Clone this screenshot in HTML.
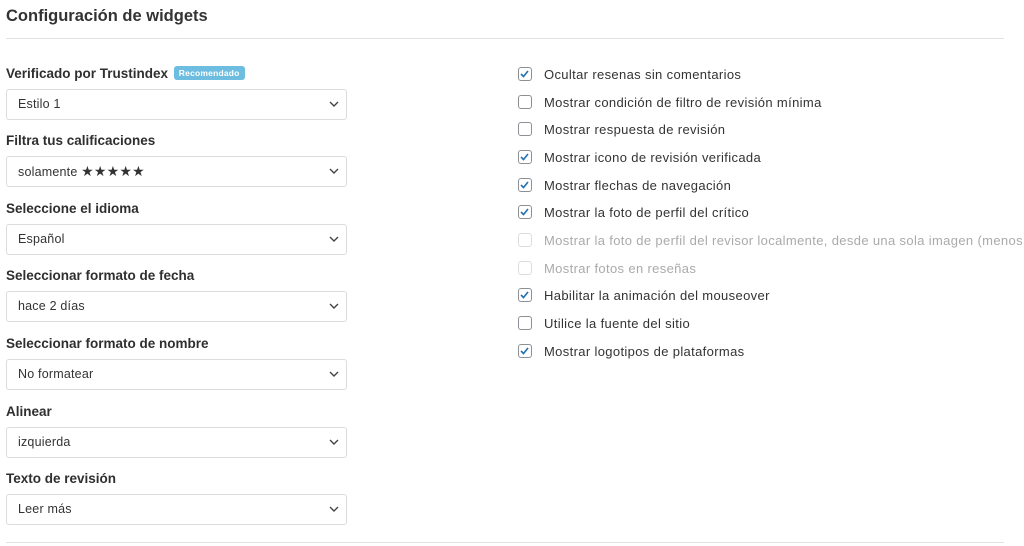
<!DOCTYPE html><html><head><meta charset="utf-8"><style>
body{margin:0;width:1024px;height:546px;background:#fff;font-family:"Liberation Sans",sans-serif;color:#333;overflow:hidden;position:relative}
.t{position:absolute;left:6px;top:7px;font-size:16.5px;font-weight:bold;color:#333}
.hr{position:absolute;left:6px;width:998px;height:1px;background:#e2e2e2}
.l{position:absolute;left:6px;font-size:13.5px;font-weight:bold;color:#2f2f2f}
.badge{display:inline-block;background:#6dbde0;color:#fff;font-size:8.5px;font-weight:bold;padding:2px 5px;border-radius:3px;vertical-align:2px;margin-left:2px;letter-spacing:0.2px}
.s{position:absolute;left:6px;width:339px;height:29px;border:1px solid #dcdcdc;border-radius:3px;font-size:12.5px;line-height:29px;color:#333;box-sizing:content-box;letter-spacing:0.2px}
.s span{margin-left:11px}
.st{font-size:14px;color:#333}
.s svg{position:absolute;right:7px;top:11px}
.c{position:absolute;left:518px;font-size:13px;color:#333;white-space:nowrap;letter-spacing:0.35px}
.c i{position:absolute;left:0;top:0;width:12px;height:12px;border:1px solid #8c8f94;border-radius:3px}
.c.d{color:#aaa}.c.d i{border-color:#ddd}
.c b{font-weight:normal;margin-left:26px}
.c svg{position:absolute;left:1px;top:2px}
</style></head><body>
<div class="t">Configuración de widgets</div>
<div class="hr" style="top:38px"></div>
<div class="hr" style="top:542px"></div>
<div class="l" style="top:66px">Verificado por Trustindex <span class="badge">Recomendado</span></div>
<div class="s" style="top:89px"><span>Estilo 1</span><svg width="10" height="7"><path d="M1 1l4 4 4-4" stroke="#444" stroke-width="1.4" fill="none"/></svg></div>
<div class="l" style="top:133px">Filtra tus calificaciones</div>
<div class="s" style="top:156px"><span>solamente <span class="st" style="margin:0">★★★★★</span></span><svg width="10" height="7"><path d="M1 1l4 4 4-4" stroke="#444" stroke-width="1.4" fill="none"/></svg></div>
<div class="l" style="top:201px">Seleccione el idioma</div>
<div class="s" style="top:224px"><span>Español</span><svg width="10" height="7"><path d="M1 1l4 4 4-4" stroke="#444" stroke-width="1.4" fill="none"/></svg></div>
<div class="l" style="top:268px">Seleccionar formato de fecha</div>
<div class="s" style="top:291px"><span>hace 2 días</span><svg width="10" height="7"><path d="M1 1l4 4 4-4" stroke="#444" stroke-width="1.4" fill="none"/></svg></div>
<div class="l" style="top:336px">Seleccionar formato de nombre</div>
<div class="s" style="top:359px"><span>No formatear</span><svg width="10" height="7"><path d="M1 1l4 4 4-4" stroke="#444" stroke-width="1.4" fill="none"/></svg></div>
<div class="l" style="top:404px">Alinear</div>
<div class="s" style="top:427px"><span>izquierda</span><svg width="10" height="7"><path d="M1 1l4 4 4-4" stroke="#444" stroke-width="1.4" fill="none"/></svg></div>
<div class="l" style="top:471px">Texto de revisión</div>
<div class="s" style="top:494px"><span>Leer más</span><svg width="10" height="7"><path d="M1 1l4 4 4-4" stroke="#444" stroke-width="1.4" fill="none"/></svg></div>

<div class="c" style="top:67px"><i></i><svg width="11" height="10"><path d="M2 5l2.5 2.5L9 2" stroke="#2271b1" stroke-width="1.6" fill="none"/></svg><b>Ocultar resenas sin comentarios</b></div>
<div class="c" style="top:95px"><i></i><b>Mostrar condición de filtro de revisión mínima</b></div>
<div class="c" style="top:122px"><i></i><b>Mostrar respuesta de revisión</b></div>
<div class="c" style="top:150px"><i></i><svg width="11" height="10"><path d="M2 5l2.5 2.5L9 2" stroke="#2271b1" stroke-width="1.6" fill="none"/></svg><b>Mostrar icono de revisión verificada</b></div>
<div class="c" style="top:178px"><i></i><svg width="11" height="10"><path d="M2 5l2.5 2.5L9 2" stroke="#2271b1" stroke-width="1.6" fill="none"/></svg><b>Mostrar flechas de navegación</b></div>
<div class="c" style="top:205px"><i></i><svg width="11" height="10"><path d="M2 5l2.5 2.5L9 2" stroke="#2271b1" stroke-width="1.6" fill="none"/></svg><b>Mostrar la foto de perfil del crítico</b></div>
<div class="c d" style="top:233px"><i></i><b>Mostrar la foto de perfil del revisor localmente, desde una sola imagen (menos s</b></div>
<div class="c d" style="top:261px"><i></i><b>Mostrar fotos en reseñas</b></div>
<div class="c" style="top:288px"><i></i><svg width="11" height="10"><path d="M2 5l2.5 2.5L9 2" stroke="#2271b1" stroke-width="1.6" fill="none"/></svg><b>Habilitar la animación del mouseover</b></div>
<div class="c" style="top:316px"><i></i><b>Utilice la fuente del sitio</b></div>
<div class="c" style="top:344px"><i></i><svg width="11" height="10"><path d="M2 5l2.5 2.5L9 2" stroke="#2271b1" stroke-width="1.6" fill="none"/></svg><b>Mostrar logotipos de plataformas</b></div>
</body></html>
